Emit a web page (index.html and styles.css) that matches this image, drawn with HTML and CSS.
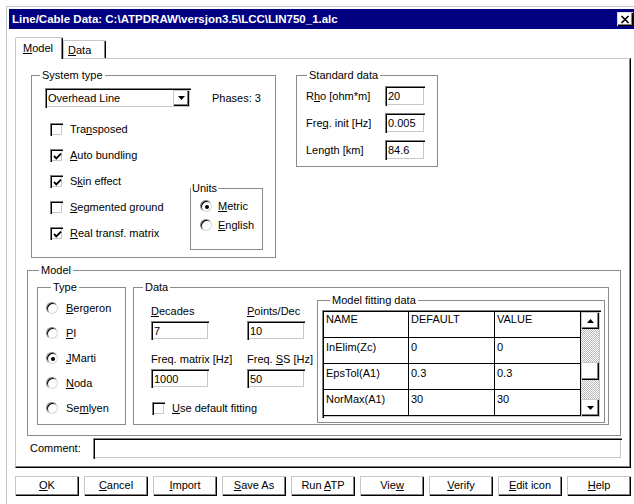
FILE: index.html
```html
<!DOCTYPE html>
<html>
<head>
<meta charset="utf-8">
<title>Line/Cable Data</title>
<link rel="stylesheet" href="styles.css">
</head>
<body>
<div class="window">
  <div class="titlebar">
    <span class="title">Line/Cable Data: C:\ATPDRAW\versjon3.5\LCC\LIN750_1.alc</span>
    <span class="close"><svg width="10" height="9" viewBox="0 0 10 9"><path d="M1.5 1 L8.5 8 M8.5 1 L1.5 8" stroke="#000" stroke-width="1.7" fill="none"/></svg></span>
  </div>

  <div class="tabs">
    <div class="tab tab-active"><u>M</u>odel</div>
    <div class="tab tab-data"><u>D</u>ata</div>
  </div>

  <div class="page">
    <div class="top-row">
      <div class="group sys">
        <span class="cap cap-sys">System type</span>
        <div class="sys-head">
          <div class="select">
            <span class="select-val">Overhead Line</span>
            <span class="select-btn"><svg width="7" height="4" viewBox="0 0 7 4"><path d="M0 0 H7 L3.5 4 Z" fill="#000"/></svg></span>
          </div>
          <span class="phases">Phases: 3</span>
        </div>
        <div class="sys-bottom">
          <div class="checks">
            <label class="check"><span class="box"></span><span>Tra<u>n</u>sposed</span></label>
            <label class="check"><span class="box on"><svg width="9" height="9" viewBox="0 0 9 9"><path d="M1 4 L3.3 6.3 L8 1.6" stroke="#000" stroke-width="1.9" fill="none"/></svg></span><span><u>A</u>uto bundling</span></label>
            <label class="check"><span class="box on"><svg width="9" height="9" viewBox="0 0 9 9"><path d="M1 4 L3.3 6.3 L8 1.6" stroke="#000" stroke-width="1.9" fill="none"/></svg></span><span>S<u>k</u>in effect</span></label>
            <label class="check"><span class="box"></span><span><u>S</u>egmented ground</span></label>
            <label class="check"><span class="box on"><svg width="9" height="9" viewBox="0 0 9 9"><path d="M1 4 L3.3 6.3 L8 1.6" stroke="#000" stroke-width="1.9" fill="none"/></svg></span><span><u>R</u>eal transf. matrix</span></label>
          </div>
          <div class="group units">
            <span class="cap cap-units">Units</span>
            <label class="opt"><span class="radio on"></span><span><u>M</u>etric</span></label>
            <label class="opt"><span class="radio"></span><span><u>E</u>nglish</span></label>
          </div>
        </div>
      </div>

      <div class="group std">
        <span class="cap cap-std">Standard data</span>
        <div class="row"><span>R<u>h</u>o [ohm*m]</span><span class="input short">20</span></div>
        <div class="row"><span>Fre<u>q</u>. init [Hz]</span><span class="input short">0.005</span></div>
        <div class="row"><span>Length [km]</span><span class="input short">84.6</span></div>
      </div>
    </div>

    <div class="group model">
      <span class="cap cap-model">Model</span>
      <div class="group type">
        <span class="cap cap-type">Type</span>
        <label class="opt"><span class="radio"></span><span><u>B</u>ergeron</span></label>
        <label class="opt"><span class="radio"></span><span><u>P</u>I</span></label>
        <label class="opt"><span class="radio on"></span><span><u>J</u>Marti</span></label>
        <label class="opt"><span class="radio"></span><span><u>N</u>oda</span></label>
        <label class="opt"><span class="radio"></span><span>Se<u>m</u>lyen</span></label>
      </div>

      <div class="group data">
        <span class="cap cap-data">Data</span>
        <div class="fields">
          <div class="fgrid">
            <span class="flabel"><u>D</u>ecades</span>
            <span class="flabel"><u>P</u>oints/Dec</span>
            <span class="input finput">7</span>
            <span class="input finput">10</span>
            <span class="flabel lower">Freq. matrix [Hz]</span>
            <span class="flabel lower">Freq. <u>S</u>S [Hz]</span>
            <span class="input finput">1000</span>
            <span class="input finput">50</span>
          </div>
          <label class="check fit-check"><span class="box"></span><span><u>U</u>se default fitting</span></label>
        </div>

        <div class="group fit">
          <span class="cap cap-fit">Model fitting data</span>
          <div class="table">
            <div class="cells">
              <span class="cell head">NAME</span>
              <span class="cell head">DEFAULT</span>
              <span class="cell head">VALUE</span>
              <span class="cell">InElim(Zc)</span>
              <span class="cell">0</span>
              <span class="cell">0</span>
              <span class="cell">EpsTol(A1)</span>
              <span class="cell">0.3</span>
              <span class="cell">0.3</span>
              <span class="cell">NorMax(A1)</span>
              <span class="cell">30</span>
              <span class="cell">30</span>
            </div>
            <div class="sb">
              <span class="sb-btn"><svg width="7" height="4" viewBox="0 0 7 4"><path d="M0 4 H7 L3.5 0 Z" fill="#000"/></svg></span>
              <span class="sb-track t1"></span>
              <span class="sb-thumb"></span>
              <span class="sb-track t2"></span>
              <span class="sb-btn"><svg width="7" height="4" viewBox="0 0 7 4"><path d="M0 0 H7 L3.5 4 Z" fill="#000"/></svg></span>
            </div>
          </div>
        </div>
      </div>
    </div>

    <div class="comment">
      <span class="comment-label">Comment:</span>
      <span class="input comment-input"></span>
    </div>
  </div>

  <div class="buttons">
    <span class="btn"><u>O</u>K</span>
    <span class="btn"><u>C</u>ancel</span>
    <span class="btn"><u>I</u>mport</span>
    <span class="btn"><u>S</u>ave As</span>
    <span class="btn">Run <u>A</u>TP</span>
    <span class="btn">Vie<u>w</u></span>
    <span class="btn"><u>V</u>erify</span>
    <span class="btn"><u>E</u>dit icon</span>
    <span class="btn"><u>H</u>elp</span>
  </div>
</div>
</body>
</html>
```

FILE: styles.css
```css
* { box-sizing: border-box; }

html, body {
  margin: 0;
  padding: 0;
  background: #fff;
  overflow: hidden;
}

body {
  font-family: "Liberation Sans", Arial, sans-serif;
  font-size: 11px;
  line-height: 13px;
  color: #000;
}

u { text-decoration: underline; text-underline-offset: 1px; }

label { display: flex; }

/* ---------- window frame ---------- */
.window {
  margin: 6px 0 0 6px;
  width: 632px;
  height: 498px;
  border-left: 1px solid #c8c8c8;
  border-top: 1px solid #c8c8c8;
  padding: 2px 0 0 2px;
}

.titlebar {
  height: 20px;
  background: #000080;
  color: #fff;
  font-weight: bold;
  font-size: 11.5px;
  display: flex;
  align-items: center;
  padding-left: 3px;
}

.title { flex: 1; white-space: nowrap; }

.close {
  width: 16px;
  height: 14px;
  margin-right: 5px;
  background: #fff;
  display: flex;
  align-items: center;
  justify-content: center;
  box-shadow: inset 1px 1px #dcdcdc, inset -1px -1px #000, inset -2px -2px #808080;
}

/* ---------- raised / sunken bevels ---------- */
.select-btn, .sb-btn, .sb-thumb, .btn {
  background: #fff;
  box-shadow: inset 1px 1px #c8c8c8, inset -1px -1px #000, inset -2px -2px #808080;
}

.input, .select, .box, .table {
  background: #fff;
  box-shadow: inset 1px 1px #808080, inset 2px 2px #000, inset -1px -1px #fff, inset -2px -2px #c8c8c8;
}

/* ---------- tabs ---------- */
.tabs {
  display: flex;
  align-items: flex-end;
  height: 21px;
  margin: 8px 0 0 6px;
}

.tab {
  background: #fff;
  border-top: 1px solid #c8c8c8;
  border-left: 1px solid #c8c8c8;
  border-right: 1px solid #000;
  border-radius: 2px 2px 0 0;
  box-shadow: inset -1px 0 #808080;
}

.tab-active {
  width: 48px;
  height: 22px;
  margin-bottom: -1px;
  padding: 4px 0 0 7px;
  position: relative;
  z-index: 1;
}

.tab-data {
  width: 43px;
  height: 18px;
  padding: 3px 0 0 4px;
}

/* ---------- tab page ---------- */
.page {
  margin-left: 6px;
  width: 616px;
  height: 410px;
  border-top: 1px solid #c8c8c8;
  border-left: 1px solid #c8c8c8;
  border-right: 1px solid #000;
  border-bottom: 1px solid #000;
  box-shadow: inset -1px -1px #808080;
}

/* ---------- group boxes ---------- */
.group {
  position: relative;
  border: 1px solid #8c8c8c;
}

.cap {
  position: absolute;
  top: -7px;
  padding: 0 2px;
  background: #fff;
  white-space: nowrap;
}

.cap-sys { left: 8px; }
.cap-std { left: 10px; }
.cap-units { left: 0; padding: 0 1px; }
.cap-model { left: 11px; }
.cap-type { left: 13px; }
.cap-data { left: 9px; }
.cap-fit { left: 12px; }

.top-row {
  display: flex;
  align-items: flex-start;
  margin: 16px 0 0 15px;
}

/* system type */
.sys {
  width: 245px;
  height: 183px;
  padding: 12px 12px 0 13px;
}

.sys-head {
  display: flex;
  align-items: center;
}

.select {
  display: flex;
  align-items: center;
  width: 146px;
  height: 20px;
  padding: 2px;
}

.select-val { flex: 1; padding-left: 1px; }

.select-btn {
  width: 16px;
  height: 16px;
  display: flex;
  align-items: center;
  justify-content: center;
}

.phases { margin-left: 21px; }

.sys-bottom {
  display: flex;
  align-items: flex-start;
  margin-top: 15px;
  padding-left: 5px;
}

.checks {
  display: flex;
  flex-direction: column;
  gap: 13px;
}

.check {
  align-items: center;
  height: 13px;
  gap: 7px;
  white-space: nowrap;
}

.box {
  width: 13px;
  height: 13px;
  flex: none;
  display: flex;
  align-items: center;
  justify-content: center;
}

.box svg { margin: 1px 0 0 1px; }

.units {
  margin-left: auto;
  margin-top: 65px;
  width: 73px;
  height: 62px;
  padding: 11px 0 0 9px;
  display: flex;
  flex-direction: column;
  gap: 7px;
}

.opt {
  align-items: center;
  height: 12px;
  gap: 6px;
  white-space: nowrap;
}

.radio {
  width: 12px;
  height: 12px;
  flex: none;
  border-radius: 50%;
  border: 1px solid;
  border-color: #808080 #d8d8d8 #d8d8d8 #808080;
  background: #fff;
  box-shadow: inset 1px 1px #000;
  display: flex;
  align-items: center;
  justify-content: center;
}

.radio.on::after {
  content: "";
  width: 4px;
  height: 4px;
  border-radius: 50%;
  background: #000;
  margin: 1px 0 0 1px;
}

/* standard data */
.std {
  margin-left: 20px;
  width: 142px;
  height: 92px;
  padding: 10px 12px 0 9px;
  display: flex;
  flex-direction: column;
  gap: 7px;
}

.row {
  display: flex;
  align-items: center;
  justify-content: space-between;
  height: 20px;
  white-space: nowrap;
}

.input {
  display: flex;
  align-items: center;
  padding: 1px 0 0 3px;
}

.short { width: 40px; height: 20px; }

/* model */
.model {
  margin: 12px 0 0 11px;
  width: 594px;
  height: 166px;
  display: flex;
  align-items: flex-start;
  gap: 7px;
  padding: 16px 0 0 9px;
}

.type {
  width: 89px;
  height: 138px;
  padding: 14px 0 0 8px;
  display: flex;
  flex-direction: column;
  gap: 13px;
}

.type .opt { gap: 8px; }

.data {
  width: 476px;
  height: 138px;
  display: flex;
  align-items: flex-start;
  padding-left: 17px;
}

.fields { padding-top: 17px; }

.fgrid {
  display: grid;
  grid-template-columns: 58px 58px;
  column-gap: 38px;
}

.flabel { white-space: nowrap; }
.flabel.lower { margin-top: 13px; }

.finput { height: 19px; margin-top: 3px; }

.fit-check { margin-top: 14px; margin-left: 1px; }

.fit {
  margin: 12px 0 0 12px;
  width: 288px;
  height: 123px;
  padding: 9px 0 0 4px;
}

.table {
  width: 279px;
  height: 108px;
  padding: 2px;
  display: flex;
}

.cells {
  flex: 1;
  display: grid;
  grid-template-columns: 85px 86px 86px;
  grid-auto-rows: 26px;
  overflow: hidden;
}

.cell {
  border-right: 1px solid #000;
  border-bottom: 1px solid #000;
  padding: 3px 0 0 2px;
  white-space: nowrap;
}

.cell.head { padding-top: 1px; }

.sb {
  width: 18px;
  display: flex;
  flex-direction: column;
}

.sb-btn {
  height: 17px;
  display: flex;
  align-items: center;
  justify-content: center;
}

.sb-track {
  background: repeating-conic-gradient(#b8b8b8 0 25%, #fff 0 50%) 0 0 / 2px 2px;
}

.t1 { height: 33px; }
.t2 { height: 19px; }
.sb-thumb { height: 18px; }

/* comment */
.comment {
  display: flex;
  align-items: center;
  margin: 2px 0 0 14px;
}

.comment-label { width: 63px; }

.comment-input { width: 529px; height: 21px; }

/* ---------- buttons ---------- */
.buttons {
  display: grid;
  grid-template-columns: repeat(9, 64px);
  column-gap: 5px;
  margin: 8px 0 0 6px;
}

.btn {
  height: 20px;
  line-height: 19px;
  text-align: center;
  white-space: nowrap;
}
```
